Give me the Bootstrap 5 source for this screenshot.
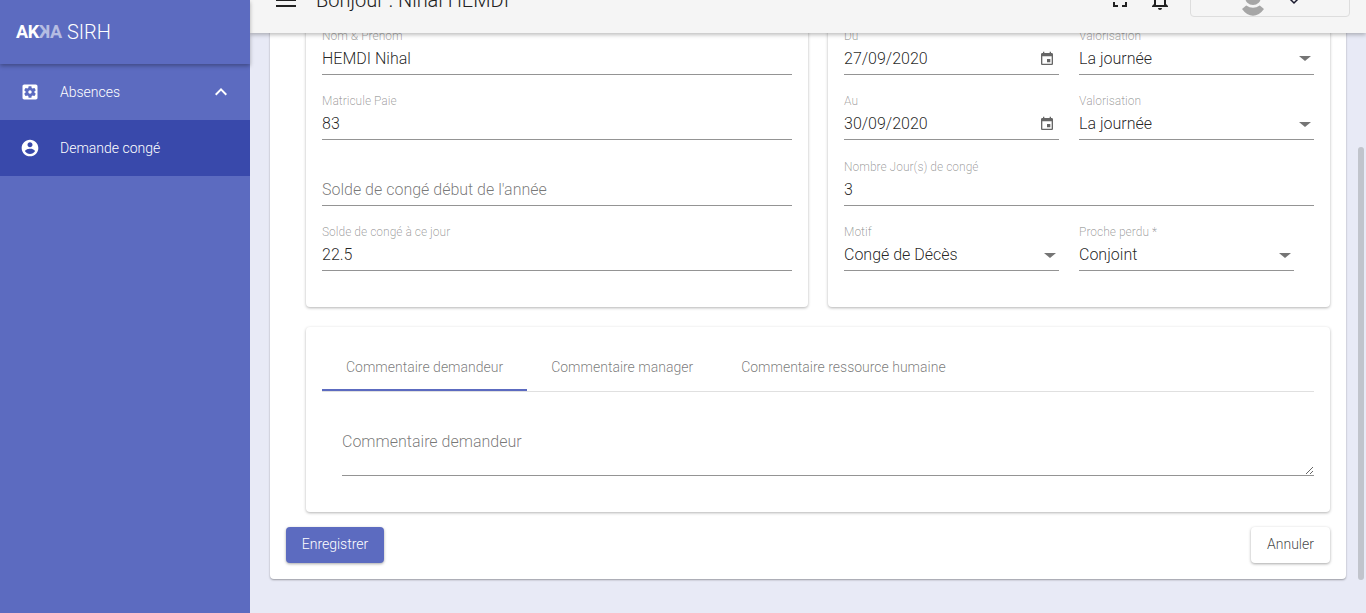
<!DOCTYPE html>
<html lang="fr">
<head>
  <meta charset="UTF-8">
  <meta name="viewport" content="width=device-width, initial-scale=1.0">
  <title>AKKA SIRH - Demande congé</title>
  <link href="https://cdn.jsdelivr.net/npm/bootstrap@5.3.1/dist/css/bootstrap.min.css" rel="stylesheet">
  <style>
    html, body { height: 100%; overflow: hidden; }
    body { font-family: Roboto, "Liberation Sans", sans-serif; font-weight: 300; background: #e8eaf6; color: rgba(0,0,0,.87); }
    .app-frame { height: 613px; }

    .side-bar { width: 250px; background: #5c6bc0; color: #fff; z-index: 3; }
    .side-brand { height: 64px; padding-left: 16px; padding-bottom: 1px; box-shadow: 0 2px 4px rgba(0,0,0,.3); font-size: 20px; font-weight: 300; }
    .brand-mark { font-size: 18px; font-weight: 700; letter-spacing: -.3px; margin-right: 5px; }
    .brand-fade { opacity: .55; }
    .brand-flip { display: inline-block; transform: scaleX(-1); }
    .side-link { height: 56px; padding: 0 20px; font-size: 14px; font-weight: 300; color: #fff; text-decoration: none; }
    .side-link svg { width: 20px; height: 20px; fill: #fff; flex: none; }
    .side-link .side-label { margin-left: 20px; }
    .side-link.is-open svg.side-arrow { width: 24px; height: 24px; margin-left: auto; margin-right: -3px; }
    .side-link.is-current { background: #3949ab; }

    .main-col { min-width: 0; position: relative; }
    .top-bar { height: 33px; background: #f5f5f5; box-shadow: 0 2px 4px rgba(0,0,0,.25); z-index: 2; flex: none; }
    .top-inner { height: 49px; margin-top: -14px; padding-left: 26px; }
    .burger { width: 20px; margin: 3px 20px 0 0; }
    .burger i { display: block; height: 2px; background: #212121; margin-top: 4px; }
    .top-title { font-size: 20px; font-weight: 300; line-height: 24px; color: #212121; margin-top: 2px; }
    .top-ico { fill: #212121; margin-top: 2px; }
    .user-box { width: 160px; height: 31px; margin: 0 16px 0 18px; border: 1px solid #ddd; border-radius: 4px; position: relative; }
    .user-pic { fill: #a6a6a6; position: absolute; left: 50px; top: 13px; }
    .user-arrow { fill: none; stroke: #1a1a2e; stroke-width: 1.5; position: absolute; left: 97px; top: 8px; }

    .scroll-thumb { position: absolute; right: 2px; top: 147px; width: 6px; height: 433px; background: #c1c4cc; border-radius: 3px; z-index: 1; }
    .scroll-area { overflow: hidden; min-height: 0; padding: 0 20px; }
    .white-panel { margin-top: -56px; height: 602px; background: #fff; border-radius: 4px; padding: 16px; box-shadow: 0 1px 2px rgba(0,0,0,.35); }

    .form-zone { padding-left: 20px; }
    .sheet { background: #fff; border-radius: 4px; box-shadow: 0 1px 3px rgba(0,0,0,.3); }
    .form-sheet { width: 502px; padding: 16px 16px 36px; }
    .field-row { display: flex; gap: 20px; }
    .field-box { height: 65.5px; display: flex; flex-direction: column; justify-content: flex-end; flex: 1 1 0; min-width: 0; }
    .field-name { font-size: 12px; line-height: 14px; color: rgba(0,0,0,.38); margin-bottom: -1px; font-weight: 300; }
    .field-line { height: 33px; padding-top: 2px; border-bottom: 1px solid #949494; display: flex; align-items: center; }
    .field-box input.form-control, .field-box select.form-select { border: 0; border-radius: 0; background: none; padding: 0; font-size: 16px; font-weight: 300; line-height: 30px; height: 30px; color: rgba(0,0,0,.87); box-shadow: none; font-family: inherit; }
    .field-box select.form-select { appearance: none; }
    .field-box input.form-control::placeholder { color: rgba(0,0,0,.54); opacity: 1; }
    .field-tail { fill: #666; flex: none; margin-right: 4px; }
    .drop-tail { width: 0; height: 0; border-left: 6px solid transparent; border-right: 6px solid transparent; border-top: 5px solid #757575; flex: none; margin-right: 3px; }
    .field-short { flex: 0 0 215px; }

    .note-sheet { margin-top: 20px; height: 185px; padding: 16px; }
    .note-tabs { height: 49px; border-bottom: 1px solid #e0e0e0; }
    .note-tab { padding: 0 24px; height: 48px; line-height: 48px; font-size: 14px; color: rgba(0,0,0,.54); background: none; border: 0; font-weight: 300; }
    .note-tab.is-on { border-bottom: 2px solid #5c6bc0; height: 48px; }
    .note-wrap { padding: 0 0 0 20px; margin-top: 34px; }
    .note-wrap textarea.form-control { display: block; border: 0; border-bottom: 1px solid #949494; border-radius: 0; padding: 0; height: 50px; font-size: 16px; font-weight: 300; line-height: 32px; box-shadow: none; background: none; }
    .note-wrap textarea.form-control::placeholder { color: rgba(0,0,0,.54); opacity: 1; }

    .action-row { margin-top: 15px; }
    .btn.save-btn { width: 98px; height: 36px; padding: 0 0 2px; font-size: 14px; font-weight: 300; color: #fff; background: #5c6bc0; border: 0; border-radius: 4px; box-shadow: 0 1px 3px rgba(0,0,0,.35); }
    .btn.cancel-btn { width: 79px; height: 36px; padding: 0 0 2px; font-size: 14px; font-weight: 300; color: rgba(0,0,0,.75); background: #fff; border: 0; border-radius: 4px; box-shadow: 0 1px 3px rgba(0,0,0,.35); }
  </style>
</head>
<body>
  <div class="app-frame d-flex">
    <aside class="side-bar d-flex flex-column">
      <div class="side-brand d-flex align-items-center">
        <span class="brand-mark">AK<span class="brand-fade"><span class="brand-flip">K</span>A</span></span> SIRH
      </div>
      <a class="side-link is-open d-flex align-items-center" href="#">
        <svg viewBox="0 0 24 24"><path d="M12 10c-1.1 0-2 .9-2 2s.9 2 2 2 2-.9 2-2-.9-2-2-2zm7-7H5c-1.11 0-2 .9-2 2v14c0 1.1.89 2 2 2h14c1.11 0 2-.9 2-2V5c0-1.1-.89-2-2-2zm-1.75 9c0 .23-.02.46-.05.68l1.48 1.16c.13.11.17.3.08.45l-1.4 2.42c-.09.15-.27.21-.43.15l-1.74-.7c-.36.28-.76.51-1.18.69l-.26 1.85c-.03.17-.18.3-.35.3h-2.8c-.17 0-.32-.13-.35-.29l-.26-1.85c-.43-.18-.82-.41-1.18-.69l-1.74.7c-.16.06-.34 0-.43-.15l-1.4-2.42c-.09-.15-.05-.34.08-.45l1.48-1.16c-.03-.23-.05-.46-.05-.69 0-.23.02-.46.05-.68l-1.48-1.16c-.13-.11-.17-.3-.08-.45l1.4-2.42c.09-.15.27-.21.43-.15l1.74.7c.36-.28.76-.51 1.18-.69l.26-1.85c.03-.17.18-.3.35-.3h2.8c.17 0 .32.13.35.29l.26 1.85c.43.18.82.41 1.18.69l1.74-.7c.16-.06.34 0 .43.15l1.4 2.42c.09.15.05.34-.08.45l-1.48 1.16c.03.23.05.46.05.69z"/></svg>
        <span class="side-label">Absences</span>
        <svg class="side-arrow" viewBox="0 0 24 24"><path d="M12 8l-6 6 1.41 1.41L12 10.83l4.59 4.58L18 14z"/></svg>
      </a>
      <a class="side-link is-current d-flex align-items-center" href="#">
        <svg viewBox="0 0 24 24"><path d="M12 2C6.48 2 2 6.48 2 12s4.48 10 10 10 10-4.48 10-10S17.52 2 12 2zm0 3c1.66 0 3 1.34 3 3s-1.34 3-3 3-3-1.34-3-3 1.34-3 3-3zm0 14.2c-2.5 0-4.71-1.28-6-3.22.03-1.99 4-3.08 6-3.08 1.99 0 5.97 1.09 6 3.08-1.29 1.94-3.5 3.22-6 3.22z"/></svg>
        <span class="side-label">Demande congé</span>
      </a>
    </aside>

    <div class="main-col flex-grow-1 d-flex flex-column">
      <header class="top-bar overflow-hidden">
        <div class="top-inner d-flex align-items-start">
          <div class="burger flex-none"><i></i><i></i><i></i></div>
          <div class="top-title flex-grow-1">Bonjour : Nihal HEMDI</div>
          <svg class="top-ico me-3" width="24" height="24" viewBox="0 0 24 24"><path d="M7 14H5v5h5v-2H7v-3zm-2-4h2V7h3V5H5v5zm12 7h-3v2h5v-5h-2v3zM14 5v2h3v3h2V5h-5z"/></svg>
          <svg class="top-ico" width="24" height="24" viewBox="0 0 24 24"><path d="M12 22c1.1 0 2-.9 2-2h-4c0 1.1.9 2 2 2zm6-6v-5c0-3.07-1.63-5.64-4.5-6.32V4c0-.83-.67-1.5-1.5-1.5s-1.5.67-1.5 1.5v.68C7.64 5.36 6 7.92 6 11v5l-2 2v1h16v-1l-2-2zm-2 1H8v-6c0-2.48 1.51-4.5 4-4.5s4 2.02 4 4.5v6z"/></svg>
          <div class="user-box flex-none">
            <svg class="user-pic" width="24" height="17" viewBox="0 0 24 17"><circle cx="12" cy="-3" r="8"/><path d="M1 9 4 6.5 5.2 5.5Q12 10 18.8 5.5L20 6.5 23 9Q18 15.8 12 15.8 6 15.8 1 9Z"/></svg>
            <svg class="user-arrow" width="12" height="12" viewBox="0 0 12 12"><path d="M2 4l4 4 4-4"/></svg>
          </div>
        </div>
      </header>

      <div class="scroll-thumb"></div>

      <main class="scroll-area flex-grow-1">
        <div class="white-panel">
          <div class="form-zone">
            <div class="d-flex gap-3 justify-content-between">
              <div class="sheet form-sheet">
                <div class="field-box">
                  <label class="field-name">Nom &amp; Prénom</label>
                  <div class="field-line"><input class="form-control" value="HEMDI Nihal"></div>
                </div>
                <div class="field-box">
                  <label class="field-name">Matricule Paie</label>
                  <div class="field-line"><input class="form-control" value="83"></div>
                </div>
                <div class="field-box">
                  <div class="field-line"><input class="form-control" placeholder="Solde de congé début de l'année"></div>
                </div>
                <div class="field-box">
                  <label class="field-name">Solde de congé à ce jour</label>
                  <div class="field-line"><input class="form-control" value="22.5"></div>
                </div>
              </div>

              <div class="sheet form-sheet">
                <div class="field-row">
                  <div class="field-box field-short">
                    <label class="field-name">Du</label>
                    <div class="field-line">
                      <input class="form-control" value="27/09/2020">
                      <svg class="field-tail" width="16" height="16" viewBox="0 0 24 24"><path d="M17 12h-5v5h5v-5zM16 1v2H8V1H6v2H5c-1.11 0-1.99.9-1.99 2L3 19c0 1.1.89 2 2 2h14c1.1 0 2-.9 2-2V5c0-1.1-.9-2-2-2h-1V1h-2zm3 18H5V8h14v11z"/></svg>
                    </div>
                  </div>
                  <div class="field-box">
                    <label class="field-name">Valorisation</label>
                    <div class="field-line">
                      <select class="form-select"><option>La journée</option></select>
                      <span class="drop-tail"></span>
                    </div>
                  </div>
                </div>
                <div class="field-row">
                  <div class="field-box field-short">
                    <label class="field-name">Au</label>
                    <div class="field-line">
                      <input class="form-control" value="30/09/2020">
                      <svg class="field-tail" width="16" height="16" viewBox="0 0 24 24"><path d="M17 12h-5v5h5v-5zM16 1v2H8V1H6v2H5c-1.11 0-1.99.9-1.99 2L3 19c0 1.1.89 2 2 2h14c1.1 0 2-.9 2-2V5c0-1.1-.9-2-2-2h-1V1h-2zm3 18H5V8h14v11z"/></svg>
                    </div>
                  </div>
                  <div class="field-box">
                    <label class="field-name">Valorisation</label>
                    <div class="field-line">
                      <select class="form-select"><option>La journée</option></select>
                      <span class="drop-tail"></span>
                    </div>
                  </div>
                </div>
                <div class="field-box">
                  <label class="field-name">Nombre Jour(s) de congé</label>
                  <div class="field-line"><input class="form-control" value="3"></div>
                </div>
                <div class="field-row">
                  <div class="field-box field-short">
                    <label class="field-name">Motif</label>
                    <div class="field-line">
                      <select class="form-select"><option>Congé de Décès</option></select>
                      <span class="drop-tail"></span>
                    </div>
                  </div>
                  <div class="field-box field-short">
                    <label class="field-name">Proche perdu *</label>
                    <div class="field-line">
                      <select class="form-select"><option>Conjoint</option></select>
                      <span class="drop-tail"></span>
                    </div>
                  </div>
                </div>
              </div>
            </div>

            <div class="sheet note-sheet">
              <div class="note-tabs d-flex">
                <button class="note-tab is-on" type="button">Commentaire demandeur</button>
                <button class="note-tab" type="button">Commentaire manager</button>
                <button class="note-tab" type="button">Commentaire ressource humaine</button>
              </div>
              <div class="note-wrap">
                <textarea class="form-control" placeholder="Commentaire demandeur"></textarea>
              </div>
            </div>
          </div>

          <div class="action-row d-flex justify-content-between">
            <button class="btn save-btn" type="button">Enregistrer</button>
            <button class="btn cancel-btn" type="button">Annuler</button>
          </div>
        </div>
      </main>
    </div>
  </div>
  <script src="https://cdn.jsdelivr.net/npm/bootstrap@5.3.1/dist/js/bootstrap.bundle.min.js"></script>
</body>
</html>
